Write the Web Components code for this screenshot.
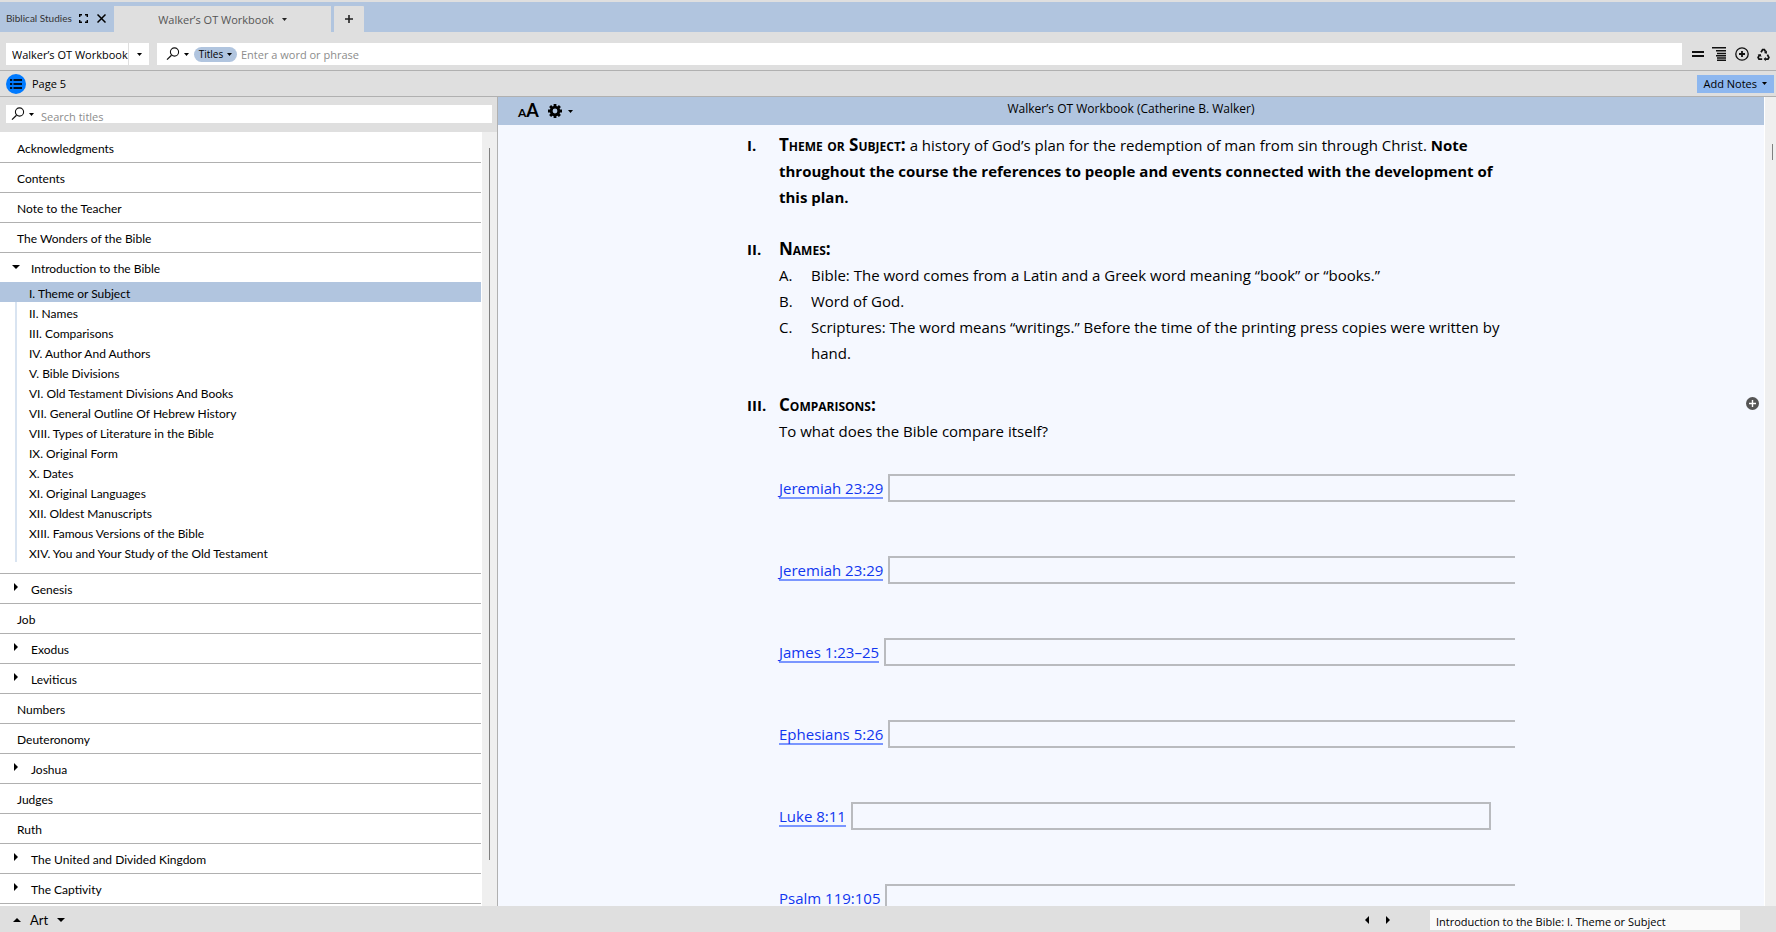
<!DOCTYPE html>
<html lang="en">
<head>
<meta charset="utf-8">
<title>Walker's OT Workbook</title>
<style>
html, body{
    height: 100%;
}

body{
    margin: 0;
    overflow: hidden;
    --ui-font: "Open Sans", "Noto Sans", sans-serif;
    --list-font: Lato, sans-serif;
    --blue: #b1c5df;
    --grey: #dfdfdf;
    --line: #b0b0b0;
    --page: #f5f8ff;
    font-family: var(--ui-font);
    font-size: 11px;
    color: #000;
}
</style>
</head>
<body>

<study-app>
    <tab-strip slot="tabs" workspace="Biblical Studies">
        <page-tab>Walker’s OT Workbook</page-tab>
    </tab-strip>

    <search-bar slot="toolbar" book="Walker’s OT Workbook"></search-bar>
    <location-bar slot="location">Page 5</location-bar>

    <toc-panel slot="sidebar">
        <toc-item>Acknowledgments</toc-item>
        <toc-item>Contents</toc-item>
        <toc-item>Note to the Teacher</toc-item>
        <toc-item>The Wonders of the Bible</toc-item>
        <toc-item kind="open">Introduction to the Bible
            <toc-entry slot="entries" selected>I. Theme or Subject</toc-entry>
            <toc-entry slot="entries">II. Names</toc-entry>
            <toc-entry slot="entries">III. Comparisons</toc-entry>
            <toc-entry slot="entries">IV. Author And Authors</toc-entry>
            <toc-entry slot="entries">V. Bible Divisions</toc-entry>
            <toc-entry slot="entries">VI. Old Testament Divisions And Books</toc-entry>
            <toc-entry slot="entries">VII. General Outline Of Hebrew History</toc-entry>
            <toc-entry slot="entries">VIII. Types of Literature in the Bible</toc-entry>
            <toc-entry slot="entries">IX. Original Form</toc-entry>
            <toc-entry slot="entries">X. Dates</toc-entry>
            <toc-entry slot="entries">XI. Original Languages</toc-entry>
            <toc-entry slot="entries">XII. Oldest Manuscripts</toc-entry>
            <toc-entry slot="entries">XIII. Famous Versions of the Bible</toc-entry>
            <toc-entry slot="entries">XIV. You and Your Study of the Old Testament</toc-entry>
        </toc-item>
        <toc-item kind="closed">Genesis</toc-item>
        <toc-item>Job</toc-item>
        <toc-item kind="closed">Exodus</toc-item>
        <toc-item kind="closed">Leviticus</toc-item>
        <toc-item>Numbers</toc-item>
        <toc-item>Deuteronomy</toc-item>
        <toc-item kind="closed">Joshua</toc-item>
        <toc-item>Judges</toc-item>
        <toc-item>Ruth</toc-item>
        <toc-item kind="closed">The United and Divided Kingdom</toc-item>
        <toc-item kind="closed">The Captivity</toc-item>
    </toc-panel>

    <book-page slot="page" heading="Walker’s OT Workbook (Catherine B. Walker)">
        <outline-row mark="I." strong><small-caps>Theme or Subject:</small-caps> a history of God’s plan for the redemption of man from sin through Christ. <b>Note throughout the course the references to people and events connected with the development of this plan.</b></outline-row>
        <line-gap></line-gap>
        <outline-row mark="II." strong><small-caps>Names:</small-caps>
            <outline-row slot="rows" mark="A.">Bible: The word comes from a Latin and a Greek word meaning “book” or “books.”</outline-row>
            <outline-row slot="rows" mark="B.">Word of God.</outline-row>
            <outline-row slot="rows" mark="C.">Scriptures: The word means “writings.” Before the time of the printing press copies were written by hand.</outline-row>
        </outline-row>
        <line-gap></line-gap>
        <outline-row mark="III." strong><small-caps>Comparisons:</small-caps><br>To what does the Bible compare itself?
            <answer-field slot="rows">Jeremiah 23:29</answer-field>
            <answer-field slot="rows">Jeremiah 23:29</answer-field>
            <answer-field slot="rows">James 1:23–25</answer-field>
            <answer-field slot="rows">Ephesians 5:26</answer-field>
            <answer-field slot="rows">Luke 8:11</answer-field>
            <answer-field slot="rows">Psalm 119:105</answer-field>
        </outline-row>
    </book-page>

    <status-bar slot="footer" place="Introduction to the Bible: I. Theme or Subject">Art</status-bar>
</study-app>

<script>
// rules that every shadow root needs
const base = `
:host, *{
    box-sizing: border-box;
}

button, input{
    font: inherit;
    color: inherit;
    margin: 0;
    padding: 0;
    border: 0;
    background: none;
    outline: none;
}

button{
    display: inline-flex;
    align-items: center;
    justify-content: center;
    flex: none;
    cursor: pointer;
}

input::placeholder{
    color: #8c8c8c;
    opacity: 1;
}

svg{
    display: block;
    flex: none;
}
`;

const caret = `<svg width="5" height="3" viewBox="0 0 5 3"><path d="M0 0h5L2.500 3z" fill="currentColor"/></svg>`;
const lens = `<svg width="14" height="14" viewBox="0 0 14 14" fill="none" stroke="#111"><circle cx="8.500" cy="5" r="4.100" stroke-width="1.100"/><path d="M5.500 8.200L1 12.600" stroke-width="1.300"/></svg>`;

class BaseElement extends HTMLElement{
    constructor(){
        super();
        this.attachShadow({mode: 'open'});
    }

    connectedCallback(){
        this.shadowRoot.innerHTML = `<style>${base}${this.styles()}</style>${this.render()}`;
    }

    styles(){
        return '';
    }

    render(){
        return '<slot></slot>';
    }

    attr(name){
        return this.getAttribute(name) || '';
    }
}

class StudyApp extends BaseElement{
    styles(){
        return `
        :host{
            display: flex;
            flex-direction: column;
            height: 100vh;
            background: var(--grey);
        }
        main{
            display: flex;
            flex: 1;
            min-height: 0;
        }
        `;
    }

    render(){
        return `
        <slot name="tabs"></slot>
        <slot name="toolbar"></slot>
        <slot name="location"></slot>
        <main>
            <slot name="sidebar"></slot>
            <slot name="page"></slot>
        </main>
        <slot name="footer"></slot>
        `;
    }
}

class TabStrip extends BaseElement{
    styles(){
        return `
        :host{
            display: flex;
            align-items: stretch;
            height: 32px;
            flex: none;
            border-top: 2px solid var(--grey);
            background: var(--blue);
        }
        .workspace{
            display: flex;
            align-items: center;
            width: 114px;
            padding: 2px 8px 0 6px;
            font-family: var(--list-font);
            font-size: 10px;
            color: #333;
            white-space: nowrap;
        }
        .workspace span{
            flex: 1;
        }
        .workspace button + button{
            margin-left: 9px;
        }
        .tabs{
            display: flex;
            gap: 3px;
            padding-top: 4px;
        }
        .add{
            width: 30px;
            background: var(--grey);
            border-radius: 1px 1px 0 0;
        }
        `;
    }

    render(){
        return `
        <div class="workspace">
            <span>${this.attr('workspace')}</span>
            <button aria-label="Full screen"><svg width="9" height="9" viewBox="0 0 9 9" fill="none" stroke="#000" stroke-width="1.400"><path d="M.7 3V.7H3M6 .7h2.300V3M8.300 6v2.300H6M3 8.300H.7V6"/></svg></button>
            <button aria-label="Close"><svg width="9" height="9" viewBox="0 0 9 9" stroke="#000" stroke-width="1.500"><path d="M.5.5l8 8M8.500.5l-8 8"/></svg></button>
        </div>
        <div class="tabs">
            <slot></slot>
            <button class="add" aria-label="New tab"><svg width="8" height="8" viewBox="0 0 8 8" stroke="#222" stroke-width="1.600"><path d="M4 0v8M0 4h8"/></svg></button>
        </div>
        `;
    }
}

class PageTab extends BaseElement{
    styles(){
        return `
        :host{
            display: flex;
            width: 217px;
            background: var(--grey);
            color: #555;
        }
        button{
            flex: 1;
            gap: 8px;
        }
        svg{
            color: #222;
        }
        `;
    }

    render(){
        return `<button><slot></slot>${caret}</button>`;
    }
}

class SearchBar extends BaseElement{
    styles(){
        return `
        :host{
            display: flex;
            align-items: center;
            gap: 8px;
            height: 38px;
            flex: none;
            padding: 6px 6px 0 6px;
        }
        .book, .search{
            display: flex;
            align-items: center;
            height: 22px;
            background: #fff;
        }
        .book{
            width: 143px;
        }
        .book input{
            flex: 1;
            min-width: 0;
            height: 22px;
            padding-left: 6px;
        }
        .book button{
            width: 21px;
            height: 22px;
            border-left: 1px solid var(--grey);
        }
        .search{
            flex: 1;
            padding-left: 9px;
        }
        .search > input{
            flex: 1;
            height: 22px;
            padding-left: 4px;
            padding-top: 1px;
        }
        .lens{
            gap: 4px;
            margin-right: 5px;
        }
        .scope{
            gap: 4px;
            width: 43px;
            height: 15px;
            border-radius: 8px;
            background: var(--blue);
            font-size: 10px;
            line-height: 14px;
        }
        .tools{
            display: flex;
            align-items: center;
            gap: 8px;
            padding-left: 2px;
        }
        `;
    }

    render(){
        return `
        <div class="book">
            <input type="text" aria-label="Book" value="${this.attr('book')}">
            <button aria-label="Choose book">${caret}</button>
        </div>
        <div class="search">
            <button class="lens" aria-label="Search type">${lens}${caret}</button>
            <button class="scope">Titles${caret}</button>
            <input type="text" aria-label="Search" placeholder="Enter a word or phrase">
        </div>
        <div class="tools">
            <button aria-label="Parallel"><svg width="12" height="14" viewBox="0 0 12 14" fill="#111"><path d="M0 4h12v2H0zM0 8h12v2H0z"/></svg></button>
            <button aria-label="Outline"><svg width="15" height="14" viewBox="0 0 15 14" fill="#111"><path d="M0 0h14v1.400H0zM4 3h10v1.400H4zM5 5.800h9v1.400H5zM4 8h10v1.400H4zM5 10.300h9v1.400H5zM5 12.600h9V14H5z"/></svg></button>
            <button aria-label="Add"><svg width="14" height="14" viewBox="0 0 14 14" fill="none" stroke="#111"><circle cx="7" cy="7" r="6.200" stroke-width="1.300"/><path d="M7 4v6M4 7h6" stroke-width="1.800"/></svg></button>
            <button aria-label="Recycle"><svg width="13" height="13" viewBox="0 0 13 13" fill="none" stroke="#111" stroke-width="1.700"><path d="M4 4.300L5.600 1.700h1.800l1.200 2M10.400 6.600l1.500 2.900-.9 1.600H8.300M5.200 11.100H2L1.100 9.500l1.400-2.600"/><path d="M9.900 2.600v3.100L7 4.900zM8.800 8.900v4.300L6.600 11.100zM.6 6.800l3.100-.9.800 3z" fill="#111" stroke="none"/></svg></button>
        </div>
        `;
    }
}

class LocationBar extends BaseElement{
    styles(){
        return `
        :host{
            display: flex;
            align-items: center;
            gap: 6px;
            height: 27px;
            flex: none;
            padding: 0 2px 0 6px;
            border-top: 1px solid var(--line);
            border-bottom: 1px solid var(--line);
        }
        span{
            flex: 1;
        }
        .notes{
            gap: 5px;
            height: 18px;
            padding: 0 7px 0 6px;
            background: #8db7ef;
        }
        `;
    }

    render(){
        return `
        <button aria-label="Contents"><svg width="20" height="20" viewBox="0 0 20 20"><circle cx="10" cy="10" r="10" fill="#007aff"/><path d="M4 5h2.200v2H4zM4 9h2.200v2H4zM4 13h2.200v2H4zM7.500 5H16v2H7.500zM7.500 9H16v2H7.500zM7.500 13H16v2H7.500z" fill="#001025"/></svg></button>
        <span><slot></slot></span>
        <button class="notes">Add Notes ${caret}</button>
        `;
    }
}

class TocPanel extends BaseElement{
    styles(){
        return `
        :host{
            display: flex;
            flex-direction: column;
            width: 30%;
            max-width: 498px;
            flex: none;
            border-right: 1px solid var(--line);
            background: var(--grey);
        }
        .search{
            display: flex;
            align-items: center;
            height: 18px;
            margin: 8px 5px 9px 6px;
            padding-left: 5px;
            flex: none;
            background: #fff;
        }
        .search button{
            gap: 4px;
        }
        .search input{
            flex: 1;
            height: 18px;
            padding-top: 5px;
            padding-left: 7px;
        }
        .body{
            display: flex;
            flex: 1;
            min-height: 0;
        }
        nav{
            flex: 1;
            overflow: hidden;
            padding-top: 1px;
            background: #fff;
            font-family: var(--list-font);
            font-size: 12px;
        }
        .scroll{
            width: 16px;
            padding: 16px 7px 46px 7px;
            border-left: 1px solid #fff;
            background: #efefef;
        }
        .thumb{
            width: 1px;
            height: 100%;
            background: #808080;
        }
        `;
    }

    render(){
        return `
        <div class="search">
            <button aria-label="Search type">${lens}${caret}</button>
            <input type="text" aria-label="Search titles" placeholder="Search titles">
        </div>
        <div class="body">
            <nav><slot></slot></nav>
            <div class="scroll"><div class="thumb"></div></div>
        </div>
        `;
    }
}

class TocItem extends BaseElement{
    styles(){
        return `
        :host{
            display: block;
            border-bottom: 1px solid var(--line);
        }
        .row{
            display: flex;
            align-items: center;
            width: 100%;
            height: 29px;
            padding: 1px 0 0 17px;
            justify-content: flex-start;
        }
        :host([kind]) .row{
            padding-left: 12px;
        }
        .arrow{
            display: flex;
            justify-content: center;
            width: 8px;
            height: 12px;
            margin-right: 11px;
        }
        .entries{
            padding-bottom: 11px;
            background: linear-gradient(#d9e4f1, #d9e4f1) 15px 0 / 2px calc(100% - 11px) no-repeat;
        }
        `;
    }

    render(){
        const kind = this.attr('kind');
        let arrow = '';
        let entries = '';
        if(kind === 'open'){
            arrow = `<span class="arrow"><svg width="8" height="8" viewBox="0 0 8 8"><path d="M0 3h8L4 7z"/></svg></span>`;
            entries = `<div class="entries"><slot name="entries"></slot></div>`;
        }else if(kind === 'closed'){
            arrow = `<span class="arrow"><svg width="4" height="8" viewBox="0 0 4 8"><path d="M0 0l4 4-4 4z"/></svg></span>`;
        }
        return `<button class="row">${arrow}<slot></slot></button>${entries}`;
    }
}

class TocEntry extends BaseElement{
    styles(){
        return `
        :host{
            display: block;
        }
        a{
            display: block;
            height: 20px;
            padding: 3px 0 0 29px;
            line-height: 18px;
            color: inherit;
            text-decoration: none;
        }
        :host([selected]) a{
            background: var(--blue);
        }
        `;
    }

    render(){
        return `<a href="#"><slot></slot></a>`;
    }
}

class BookPage extends BaseElement{
    styles(){
        return `
        :host{
            display: flex;
            flex: 1;
            min-width: 0;
            background: var(--page);
        }
        .page{
            position: relative;
            display: flex;
            flex-direction: column;
            flex: 1;
            min-width: 0;
        }
        header{
            display: grid;
            grid-template-columns: 1fr auto 1fr;
            height: 28px;
            flex: none;
            padding: 0 20px;
            background: var(--blue);
        }
        .tools{
            display: flex;
            align-items: center;
            gap: 9px;
        }
        .size{
            align-items: baseline;
            font-family: var(--list-font);
            font-weight: bold;
            font-size: 12px;
            line-height: 20px;
        }
        .size span{
            font-size: 18px;
        }
        .gear{
            gap: 6px;
        }
        h1{
            margin: 0;
            font-size: 12px;
            font-weight: normal;
            line-height: 24px;
        }
        article{
            flex: 1;
            min-height: 0;
            width: 100%;
            max-width: 768px;
            margin: 0 auto;
            padding-top: 7px;
            overflow: hidden;
            font-size: 15px;
            line-height: 26px;
        }
        /* note marker that floats over the right margin */
        .note{
            position: absolute;
            right: 5px;
            top: 300px;
        }
        .scroll{
            width: 12px;
            flex: none;
            padding: 47px 3px 0 7px;
            border-left: 1px solid #fff;
            background: #efefef;
        }
        .thumb{
            width: 1px;
            height: 16px;
            background: #808080;
        }
        `;
    }

    render(){
        return `
        <div class="page">
            <header>
                <div class="tools">
                    <button class="size" aria-label="Text size">A<span>A</span></button>
                    <button class="gear" aria-label="Display settings">
                        <svg width="14" height="14" viewBox="0 0 14 14"><circle cx="7" cy="7" r="3.800" fill="none" stroke="#000" stroke-width="2.800"/><path d="M5.600 0h2.800v3H5.600zM5.600 11h2.800v3H5.600zM0 5.600h3v2.800H0zM11 5.600h3v2.800h-3zM1.100 3.100l2-2 2.100 2.100-2 2zM10.900 1.100l2 2-2.100 2.100-2-2zM1.100 10.900l2-2 2.100 2-2.100 2zM10.900 12.900l2-2-2-2.100-2.100 2.100z"/></svg>
                        ${caret}
                    </button>
                </div>
                <h1>${this.attr('heading')}</h1>
            </header>
            <article><slot></slot></article>
            <button class="note" aria-label="Add note"><svg width="13" height="13" viewBox="0 0 13 13"><circle cx="6.500" cy="6.500" r="6.500" fill="#555"/><path d="M6.500 3v7M3 6.500h7" stroke="#fff" stroke-width="1.400"/></svg></button>
        </div>
        <div class="scroll"><div class="thumb"></div></div>
        `;
    }
}

class OutlineRow extends BaseElement{
    styles(){
        return `
        :host{
            display: grid;
            grid-template-columns: 32px minmax(0, 1fr);
        }
        :host([strong]) .mark{
            font-weight: bold;
        }
        `;
    }

    render(){
        return `
        <div class="mark">${this.attr('mark')}</div>
        <div><div><slot></slot></div><slot name="rows"></slot></div>
        `;
    }
}

class SmallCaps extends BaseElement{
    styles(){
        return `
        :host{
            font-size: 17px;
            font-weight: bold;
            font-variant: small-caps;
            line-height: 24px;
        }
        `;
    }
}

class LineGap extends BaseElement{
    styles(){
        return `
        :host{
            display: block;
            height: 26px;
        }
        `;
    }
}

class AnswerField extends BaseElement{
    styles(){
        return `
        :host{
            display: flex;
            align-items: center;
            gap: 5px;
            height: 28px;
            margin-top: 30px;
            margin-bottom: 54px;
        }
        :host(:not(:first-of-type)){
            margin-top: 0;
        }
        a{
            flex: none;
            height: 22px;
            line-height: 22px;
            color: #1036ef;
            text-decoration: none;
            border-bottom: 2px solid #7a96ff;
        }
        input{
            width: 640px;
            height: 28px;
            flex: none;
            border: 2px solid #b9bbbf;
            padding: 0 4px;
        }
        `;
    }

    render(){
        return `<a href="#"><slot></slot></a><input type="text" aria-label="${this.textContent}">`;
    }
}

class StatusBar extends BaseElement{
    styles(){
        return `
        :host{
            display: flex;
            align-items: center;
            height: 26px;
            flex: none;
            padding: 2px 36px 0 13px;
            background: var(--grey);
        }
        .art{
            display: flex;
            align-items: center;
            gap: 9px;
            flex: 1;
            font-family: var(--list-font);
            font-size: 13px;
        }
        .turn{
            display: flex;
            gap: 17px;
            margin-right: 40px;
            color: #222;
        }
        .place{
            width: 310px;
            height: 20px;
            padding: 3px 6px 0;
            background: #fafafa;
        }
        `;
    }

    render(){
        return `
        <div class="art">
            <button aria-label="Previous"><svg width="8" height="4" viewBox="0 0 8 4"><path d="M0 4h8L4 0z"/></svg></button>
            <slot></slot>
            <button aria-label="Choose"><svg width="8" height="4" viewBox="0 0 8 4"><path d="M0 0h8L4 4z"/></svg></button>
        </div>
        <div class="turn">
            <button aria-label="Back"><svg width="4" height="8" viewBox="0 0 4 8"><path d="M4 0v8L0 4z"/></svg></button>
            <button aria-label="Forward"><svg width="4" height="8" viewBox="0 0 4 8"><path d="M0 0v8l4-4z"/></svg></button>
        </div>
        <input class="place" type="text" aria-label="Location" value="${this.attr('place')}">
        `;
    }
}

customElements.define('study-app', StudyApp);
customElements.define('tab-strip', TabStrip);
customElements.define('page-tab', PageTab);
customElements.define('search-bar', SearchBar);
customElements.define('location-bar', LocationBar);
customElements.define('toc-panel', TocPanel);
customElements.define('toc-item', TocItem);
customElements.define('toc-entry', TocEntry);
customElements.define('book-page', BookPage);
customElements.define('outline-row', OutlineRow);
customElements.define('small-caps', SmallCaps);
customElements.define('line-gap', LineGap);
customElements.define('answer-field', AnswerField);
customElements.define('status-bar', StatusBar);
</script>
</body>
</html>
